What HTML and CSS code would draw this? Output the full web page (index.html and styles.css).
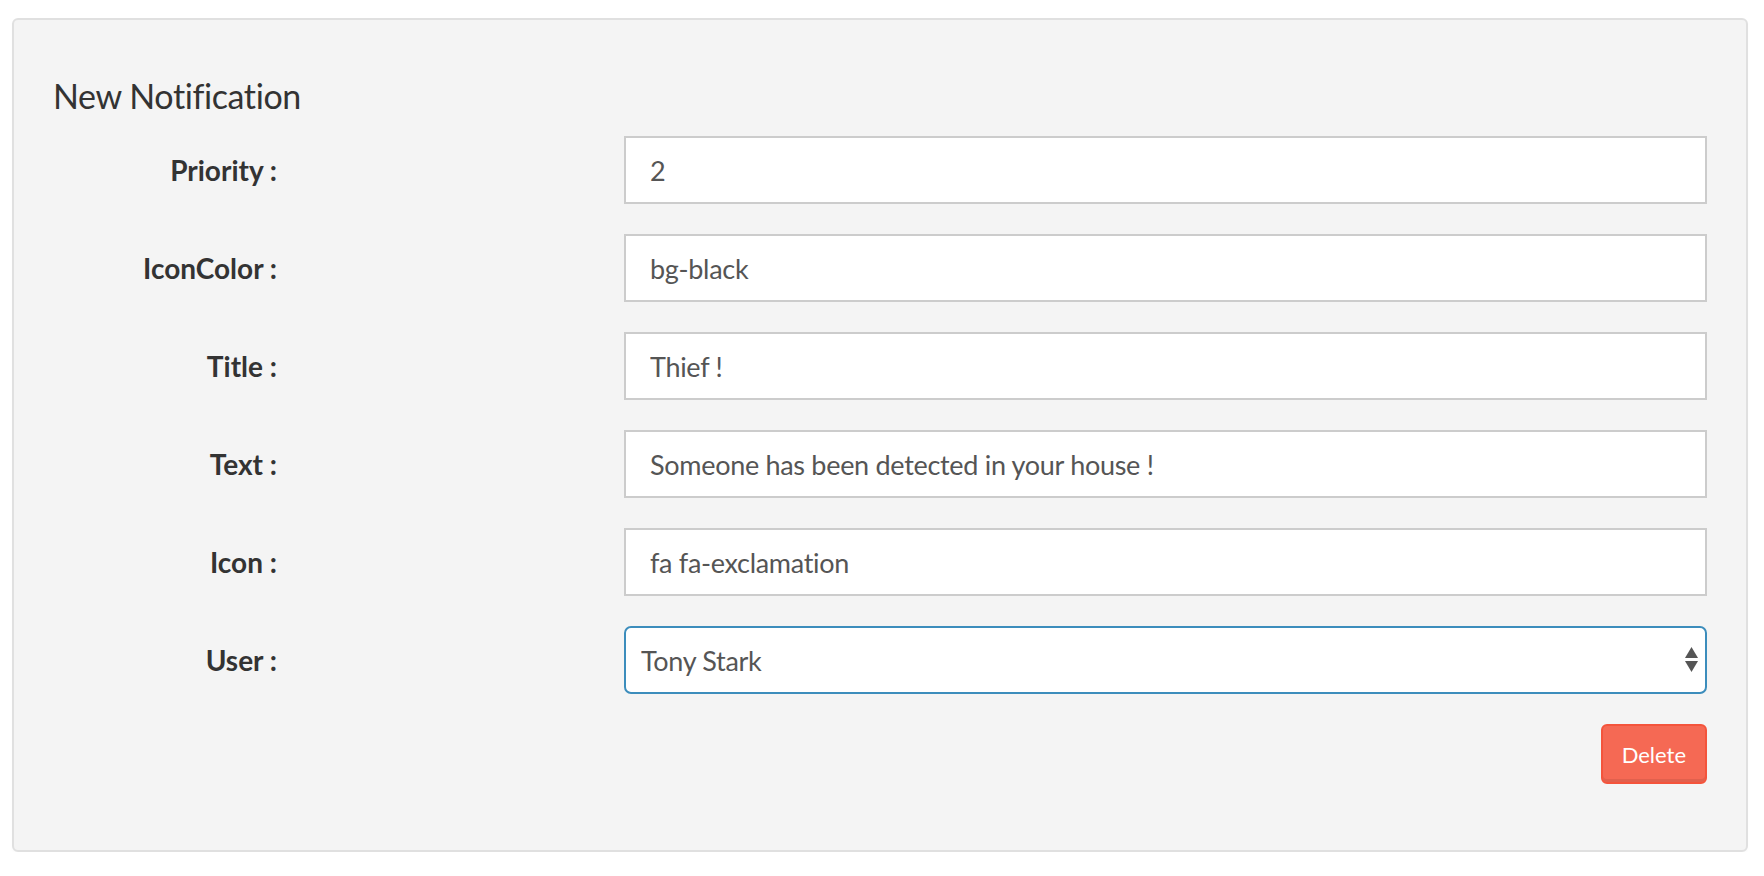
FILE: index.html
```html
<!DOCTYPE html>
<html lang="en">
<head>
<meta charset="utf-8">
<title>New Notification</title>
<link rel="stylesheet" href="styles.css">
</head>
<body>
<div class="card">
  <h3 class="card-title">New Notification</h3>
  <form class="form">
    <div class="form-row">
      <label class="form-label">Priority :</label>
      <input class="form-input" type="text" value="2">
    </div>
    <div class="form-row">
      <label class="form-label">IconColor :</label>
      <input class="form-input" type="text" value="bg-black">
    </div>
    <div class="form-row">
      <label class="form-label">Title :</label>
      <input class="form-input" type="text" value="Thief !">
    </div>
    <div class="form-row">
      <label class="form-label">Text :</label>
      <input class="form-input" type="text" value="Someone has been detected in your house !">
    </div>
    <div class="form-row">
      <label class="form-label">Icon :</label>
      <input class="form-input" type="text" value="fa fa-exclamation">
    </div>
    <div class="form-row">
      <label class="form-label">User :</label>
      <div class="select-wrap">
        <select class="form-select">
          <option>Tony Stark</option>
        </select>
        <svg class="select-arrows" width="13" height="26" viewBox="0 0 13 26">
          <polygon points="6.5,0 13,11 0,11" fill="#555"/>
          <polygon points="0,14 13,14 6.5,25" fill="#555"/>
        </svg>
      </div>
    </div>
    <div class="actions">
      <button type="button" class="btn-danger">Delete</button>
    </div>
  </form>
</div>
</body>
</html>
```
FILE: styles.css
```css
html, body {
  margin: 0;
  padding: 0;
  background: #ffffff;
}
body {
  font-family: "Lato", "Open Sans", sans-serif;
  color: #333;
  padding: 18px 16px 0 12px;
}
.card {
  background: #f4f4f4;
  border: 2px solid #e0e0e0;
  border-radius: 6px;
  padding: 56px 39px 66px 39px;
  box-shadow: 0 2px 3px rgba(0,0,0,0.02);
}
.card-title {
  margin: 0 0 20px 0;
  font-size: 34px;
  line-height: 40px;
  font-weight: 400;
  letter-spacing: -0.4px;
  color: #333;
}
.form {
  margin: 0;
}
.form-row {
  display: grid;
  grid-template-columns: 571px 1fr;
  align-items: center;
  margin-bottom: 30px;
}
.form-label {
  text-align: right;
  padding-right: 347px;
  font-size: 28px;
  font-weight: 700;
  color: #333;
}
.form-input {
  box-sizing: border-box;
  height: 68px;
  width: 100%;
  border: 2px solid #cccccc;
  background: #fff;
  padding: 0 24px;
  font-family: inherit;
  font-size: 27px;
  letter-spacing: -0.3px;
  color: #555;
  outline: none;
  border-radius: 0;
}
.select-wrap {
  position: relative;
}
.form-select {
  box-sizing: border-box;
  height: 68px;
  width: 100%;
  border: 2px solid #3c8dbc;
  border-radius: 7px;
  background: #fff;
  padding: 0 15px;
  font-family: inherit;
  font-size: 27px;
  letter-spacing: -0.3px;
  color: #555;
  outline: none;
  -webkit-appearance: none;
  appearance: none;
}
.select-arrows {
  position: absolute;
  right: 9px;
  top: 21px;
  pointer-events: none;
}
.actions {
  display: flex;
  justify-content: flex-end;
}
.btn-danger {
  box-sizing: border-box;
  height: 60px;
  padding: 0 19px;
  background: #f56954;
  border: 2px solid #f4543c;
  border-radius: 6px;
  box-shadow: inset 0 -3px 0 rgba(0,0,0,0.08);
  color: #fff;
  font-family: inherit;
  font-size: 22px;
  font-weight: 400;
}
```
